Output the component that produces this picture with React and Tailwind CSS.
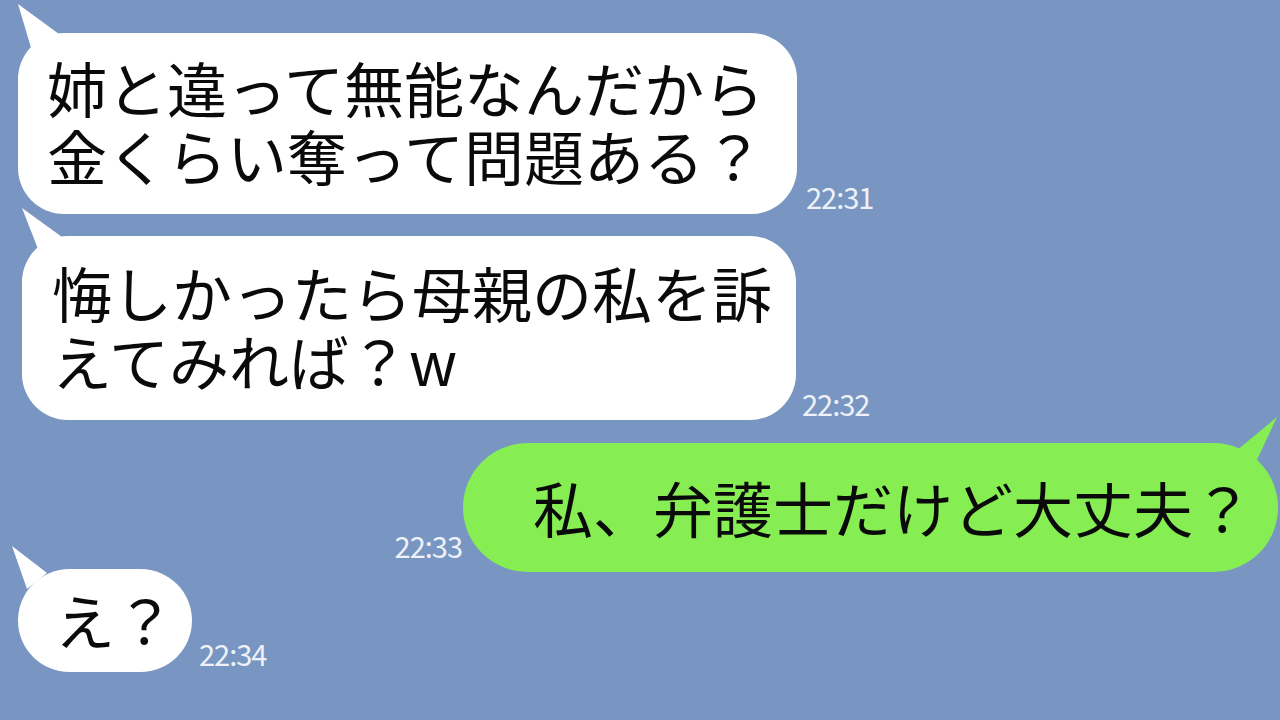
import React from "react";

const font = { fontFamily: '"Noto Sans CJK JP", "Noto Sans", sans-serif' };

function Tail({ points, color, right }) {
  return (
    <svg
      className={right ? "absolute right-0 top-0 overflow-visible" : "absolute left-0 top-0 overflow-visible"}
      width="1"
      height="1"
    >
      <polygon points={points} fill={color} />
    </svg>
  );
}

function Time({ children, className }) {
  return (
    <div
      className={"text-[29px] leading-[29px] tracking-[-1px] text-[#eef2f8] " + className}
      style={font}
    >
      {children}
    </div>
  );
}

export default function App() {
  return (
    <div className="w-[1280px] h-[720px] overflow-hidden bg-[#7896c1] flex flex-col" style={font}>
      {/* bubble 1 */}
      <div className="flex items-end mt-[33px] pl-[18px]">
        <div className="relative w-[779px] h-[181px] rounded-[46px] bg-white pl-[29px] pt-[20px] text-[60px] leading-[68px] text-[#0a0a0a] whitespace-nowrap">
          <Tail points="0,-29 41,1 14,18" color="#ffffff" />
          <p>
            姉と違って無能なんだから
            <br />
            金くらい奪って問題ある？
          </p>
        </div>
        <Time className="ml-[9px] mb-[3px]">22:31</Time>
      </div>

      {/* bubble 2 */}
      <div className="flex items-end mt-[22px] pl-[22px]">
        <div className="relative w-[774px] h-[184px] rounded-[46px] bg-white pl-[30px] pt-[22px] text-[60px] leading-[68px] text-[#0a0a0a] whitespace-nowrap">
          <Tail points="0,-28 40,1 18,18" color="#ffffff" />
          <p>
            悔しかったら母親の私を訴
            <br />
            えてみれば？w
          </p>
        </div>
        <Time className="ml-[6px] mb-[2px]">22:32</Time>
      </div>

      {/* green bubble */}
      <div className="flex items-end justify-end mt-[23px] pr-[2px]">
        <Time className="mr-[1px] mb-[12px]">22:33</Time>
        <div className="relative w-[815px] h-[129px] rounded-[65px] bg-[#86ee52] pl-[70px] flex items-center text-[60px] leading-[68px] text-[#0a0a0a] whitespace-nowrap">
          <Tail right points="0,-26 -41,8 -22,21" color="#86ee52" />
          <span className="mt-[-2px]">私、弁護士だけど大丈夫？</span>
        </div>
      </div>

      {/* small bubble */}
      <div className="flex items-end mt-[-3px] pl-[18px]">
        <div className="relative w-[174px] h-[103px] rounded-[52px] bg-white pl-[37px] flex items-center text-[60px] leading-[68px] text-[#0a0a0a] whitespace-nowrap">
          <Tail points="-6,-23 29,4 9,20" color="#ffffff" />
          <span className="mt-[-4px]">え？</span>
        </div>
        <Time className="ml-[7px] mb-[4px]">22:34</Time>
      </div>
    </div>
  );
}
